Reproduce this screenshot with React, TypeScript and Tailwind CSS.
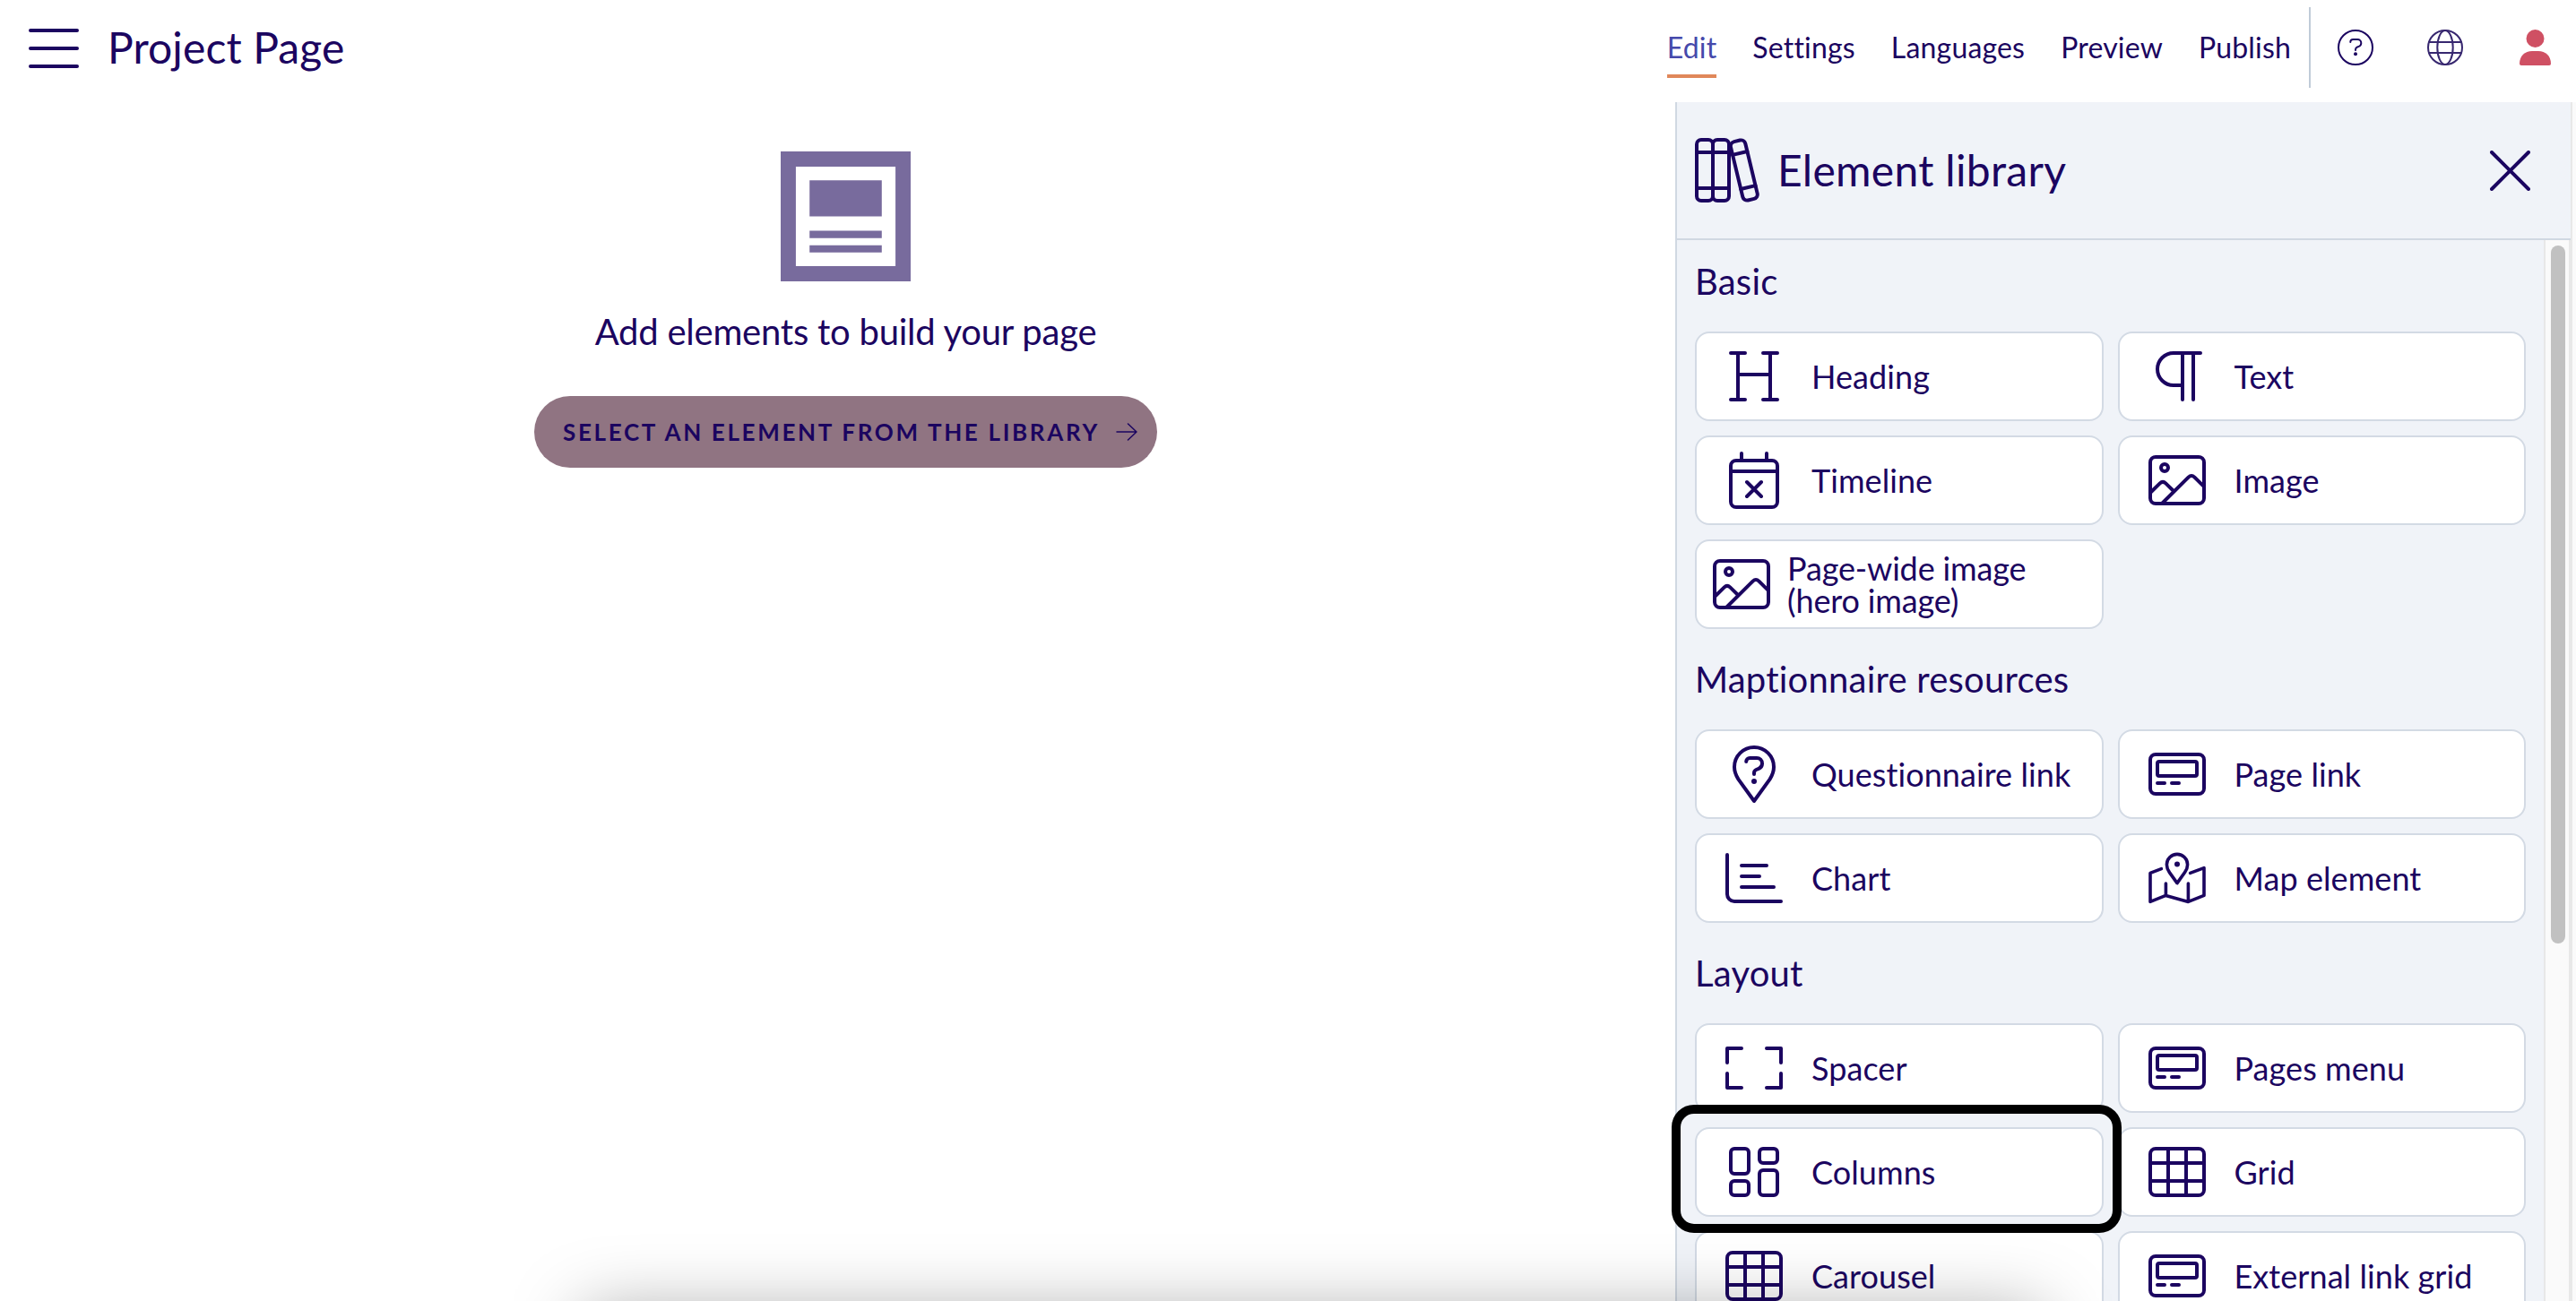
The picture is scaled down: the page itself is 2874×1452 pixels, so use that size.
import React from 'react';

const stroke = {
  fill: 'none',
  stroke: 'currentColor',
  strokeWidth: 2,
  strokeLinecap: 'round' as const,
  strokeLinejoin: 'round' as const,
};

const Icon: React.FC<{ children: React.ReactNode }> = ({ children }) => (
  <svg viewBox="0 0 32 32" className="w-16 h-16 shrink-0" {...stroke}>
    {children}
  </svg>
);

const HeadingIcon = () => (
  <Icon>
    <path d="M3 3h8M21 3h8M3 29h8M21 29h8M7 3v26M25 3v26M7 15h18" />
  </Icon>
);

const TextIcon = () => (
  <Icon>
    <path d="M29 3H14a9 9 0 0 0 0 18h5M19 3v26M25 3v26" />
  </Icon>
);

const TimelineIcon = () => (
  <Icon>
    <rect x="3" y="5" width="26" height="26" rx="3" />
    <path d="M3 11h26M9 1v4M23 1v4M12 17l8 8M20 17l-8 8" />
  </Icon>
);

const ImageIcon = () => (
  <Icon>
    <rect x="1" y="3" width="30" height="26" rx="3" />
    <circle cx="9" cy="9" r="2" />
    <path d="M1.5 22.5l4.9-4.8q1.6-1.5 3.2 0L14 22M7.5 29L22.3 14.3q1.7-1.6 3.4 0L31 19.6" />
  </Icon>
);

const QuestionnaireIcon = () => (
  <Icon>
    <path d="M16 31L7.2 18.8C5.7 16.4 5 14.4 5 12a11 11 0 0 1 22 0c0 2.4-.7 4.4-2.2 6.8z" />
    <path d="M11.6 9a2 2 0 0 1 2-2h3.9a3 3 0 0 1 3 3v.2a3 3 0 0 1-1.9 2.7l-1.4.6A2 2 0 0 0 16 15.3V16" />
    <circle cx="16" cy="20" r="1.5" fill="currentColor" stroke="none" />
  </Icon>
);

const PageLinkIcon = () => (
  <Icon>
    <rect x="1" y="5" width="30" height="22" rx="3" />
    <rect x="5" y="9" width="22" height="8" rx="1" />
    <path d="M5 21h4M13 21h4" />
  </Icon>
);

const ChartIcon = () => (
  <Icon>
    <path d="M1 3v22a4 4 0 0 0 4 4h26M9 9h14M9 15h10M9 21h18" />
  </Icon>
);

const MapIcon = () => (
  <Icon>
    <g strokeWidth="1.8">
      <path d="M16 18.8l-4.3-6C10.6 11.2 10.2 9.9 10.2 8.5a5.8 5.8 0 0 1 11.6 0c0 1.4-.4 2.7-1.5 4.3z" />
      <path d="M7.2 10.8L1 13.2v16l8.7-3.5 12.5 3.5 8.8-3.5V10.3l-7.7 2.9M9.7 19v6.7M22.2 19v10.2" />
    </g>
    <circle cx="16" cy="8.3" r="1.5" fill="currentColor" stroke="none" />
  </Icon>
);

const SpacerIcon = () => (
  <Icon>
    <path d="M9 5H1v8M23 5h8v8M1 19v8h8M31 19v8h-8" />
  </Icon>
);

const ColumnsIcon = () => (
  <Icon>
    <rect x="3" y="3" width="10" height="14" rx="2" />
    <rect x="19" y="3" width="10" height="8" rx="2" />
    <rect x="3" y="21" width="10" height="8" rx="2" />
    <rect x="19" y="15" width="10" height="14" rx="2" />
  </Icon>
);

const GridIcon = () => (
  <Icon>
    <rect x="1" y="3" width="30" height="26" rx="3" />
    <path d="M11 3v26M21 3v26M1 11h30M1 21h30" />
  </Icon>
);

const LibraryIcon = () => (
  <svg viewBox="0 0 36 36" className="w-[72px] h-[72px]" {...stroke}>
    <rect x="1" y="1" width="9" height="34" rx="2.5" />
    <rect x="10" y="1" width="9" height="34" rx="2.5" />
    <path d="M1 8h18M1 28h18" />
    <g transform="translate(27.4 18) rotate(-13.5)">
      <rect x="-4.2" y="-16.8" width="8.4" height="33.6" rx="2.5" />
      <path d="M-4.2-9.8h8.4M-4.2 9.8h8.4" />
    </g>
  </svg>
);

type Item = { label: string; icon: React.FC; wide?: boolean; highlighted?: boolean };

const sections: { title: string; items: Item[] }[] = [
  {
    title: 'Basic',
    items: [
      { label: 'Heading', icon: HeadingIcon },
      { label: 'Text', icon: TextIcon },
      { label: 'Timeline', icon: TimelineIcon },
      { label: 'Image', icon: ImageIcon },
      { label: 'Page-wide image (hero image)', icon: ImageIcon, wide: true },
    ],
  },
  {
    title: 'Maptionnaire resources',
    items: [
      { label: 'Questionnaire link', icon: QuestionnaireIcon },
      { label: 'Page link', icon: PageLinkIcon },
      { label: 'Chart', icon: ChartIcon },
      { label: 'Map element', icon: MapIcon },
    ],
  },
  {
    title: 'Layout',
    items: [
      { label: 'Spacer', icon: SpacerIcon },
      { label: 'Pages menu', icon: PageLinkIcon },
      { label: 'Columns', icon: ColumnsIcon, highlighted: true },
      { label: 'Grid', icon: GridIcon },
      { label: 'Carousel', icon: GridIcon },
      { label: 'External link grid', icon: PageLinkIcon },
    ],
  },
];

const navItems = ['Edit', 'Settings', 'Languages', 'Preview', 'Publish'];

const ElementCard: React.FC<{ item: Item }> = ({ item }) => {
  const ItemIcon = item.icon;
  return (
    <div className="relative">
      <button
        className={`w-full h-[100px] flex items-center bg-white border-2 border-[#d3dae4] rounded-2xl text-left text-[36px] leading-[36px] ${
          item.wide ? 'pl-[18px] pr-16 gap-[19px] tracking-[-0.15px]' : 'pl-8 gap-8 tracking-[0.07px]'
        }`}
      >
        <ItemIcon />
        <span className={item.wide ? 'w-[300px]' : 'whitespace-nowrap'}>{item.label}</span>
      </button>
      {item.highlighted && (
        <div className="absolute z-10 -left-[26px] -right-5 -top-[25px] -bottom-[18px] border-[10px] border-black rounded-[25px]"></div>
      )}
    </div>
  );
};

const Header = () => (
  <header className="h-[114px] pb-2 pl-8 pr-7 shrink-0 flex items-center">
    <svg viewBox="0 0 56 44" className="w-14 h-11 mt-0.5" {...stroke} strokeWidth={4}>
      <path d="M2 2h52M2 22h52M2 42h52" />
    </svg>
    <h1 className="ml-8 text-[48px] leading-[58px] tracking-[0.1px]">Project Page</h1>

    <nav className="ml-auto flex items-center gap-10 text-[32px] leading-[38px] tracking-[0.18px]">
      {navItems.map((name) => (
        <a
          key={name}
          className={`py-[11px] border-y-4 border-t-transparent ${
            name === 'Edit' ? 'text-[#4549ab] border-b-[#e0875a]' : 'border-b-transparent'
          }`}
        >
          {name}
        </a>
      ))}
    </nav>
    <div className="ml-5 w-0.5 h-[90px] bg-[#c0cbd8]"></div>
    <svg viewBox="0 0 40 40" className="ml-[30px] w-10 h-10" {...stroke}>
      <circle cx="20" cy="20" r="19" />
      <path d="M14.3 14a3 3 0 0 1 3-3h5a4 4 0 0 1 4 4v.3a4 4 0 0 1-2.6 3.6l-1.7.6a3 3 0 0 0-2 2.8V23" />
      <circle cx="20" cy="27.3" r="2" fill="currentColor" stroke="none" />
    </svg>
    <svg viewBox="0 0 40 40" className="ml-[60px] w-10 h-10 text-[#37276f]" {...stroke}>
      <circle cx="20" cy="20" r="19" />
      <ellipse cx="20" cy="20" rx="8.7" ry="19" />
      <path d="M2 14h36M2 26h36" />
    </svg>
    <svg viewBox="0 0 35 40" className="ml-[63px] w-[35px] h-10 text-[#cf5063]" fill="currentColor">
      <circle cx="17.5" cy="10" r="10" />
      <path d="M2 40q-2 0-2-2C0 29.5 6 24 14 24h7c8 0 14 5.5 14 14q0 2-2 2z" />
    </svg>
  </header>
);

const EmptyPage = () => (
  <main className="flex-1 pl-[18px] pt-[55px] flex flex-col items-center">
    <svg viewBox="0 0 18 18" className="w-[145px] h-[145px] text-[#786b9d]" fill="currentColor">
      <path fillRule="evenodd" d="M0 0h18v18H0zM2.1 2.1v13.8h13.8V2.1z" />
      <path d="M4 4h10v5H4zM4 11h10v1H4zM4 13h10v1H4z" />
    </svg>
    <p className="mt-8 text-[40px] leading-[48px] tracking-[-0.23px]">Add elements to build your page</p>
    <button className="mt-12 h-20 w-[695px] pl-8 pr-[22px] flex items-center rounded-full bg-[#907482] text-[26px] font-bold tracking-[2.67px] whitespace-nowrap">
      SELECT AN ELEMENT FROM THE LIBRARY
      <svg viewBox="0 0 24 20" className="ml-auto w-6 h-5" {...stroke} strokeWidth={1.5}>
        <path d="M1 10h22M13.5 1l9.5 9-9.5 9" />
      </svg>
    </button>
  </main>
);

const ElementLibrary = () => (
  <aside className="w-[1001px] shrink-0 flex flex-col bg-[#f0f3f8] border-l-2 border-l-[#d0d8e2] border-r-2 border-r-[#e8e8e8]">
    <div className="h-[154px] shrink-0 border-b-2 border-[#d0d8e2] pl-5 pr-[45px] flex items-center">
      <LibraryIcon />
      <h2 className="ml-5 text-[48px] leading-[58px] tracking-[0.3px]">Element library</h2>
      <svg viewBox="0 0 45 45" className="ml-auto w-[45px] h-[45px]" {...stroke} strokeWidth={4}>
        <path d="M2 2l41 41M43 2L2 43" />
      </svg>
    </div>
    <div className="flex-1 min-h-0 flex">
      <div className="flex-1 min-w-0 px-5 pt-[22px] flex flex-col gap-8">
        {sections.map((section) => (
          <section key={section.title}>
            <h3 className="text-[40px] leading-[48px] tracking-[0.22px] mb-8">{section.title}</h3>
            <div className="grid grid-cols-2 gap-4">
              {section.items.map((item) => (
                <ElementCard key={item.label} item={item} />
              ))}
            </div>
          </section>
        ))}
      </div>
      {/* Scrollbar */}
      <div className="w-[30px] shrink-0 pt-1.5 pl-1.5 bg-[#fafafa] border-x-2 border-[#e8e8e8]">
        <div className="w-4 h-[779px] rounded-full bg-[#c1c1c1]"></div>
      </div>
    </div>
  </aside>
);

export default function App() {
  return (
    <div className="relative w-[2874px] h-[1452px] overflow-hidden flex flex-col bg-white text-[#1b0560] font-['Lato',sans-serif] [font-variant-ligatures:none]">
      <Header />
      <div className="flex-1 min-h-0 flex">
        <EmptyPage />
        <ElementLibrary />
        <div className="w-1 bg-[#fafafa]"></div>
      </div>
      {/* Shadow of the dialog that waits below the fold */}
      <div className="absolute left-[650px] right-[595px] top-[1465px] h-40 shadow-[0_0_80px_rgba(0,0,0,0.35)]"></div>
    </div>
  );
}
